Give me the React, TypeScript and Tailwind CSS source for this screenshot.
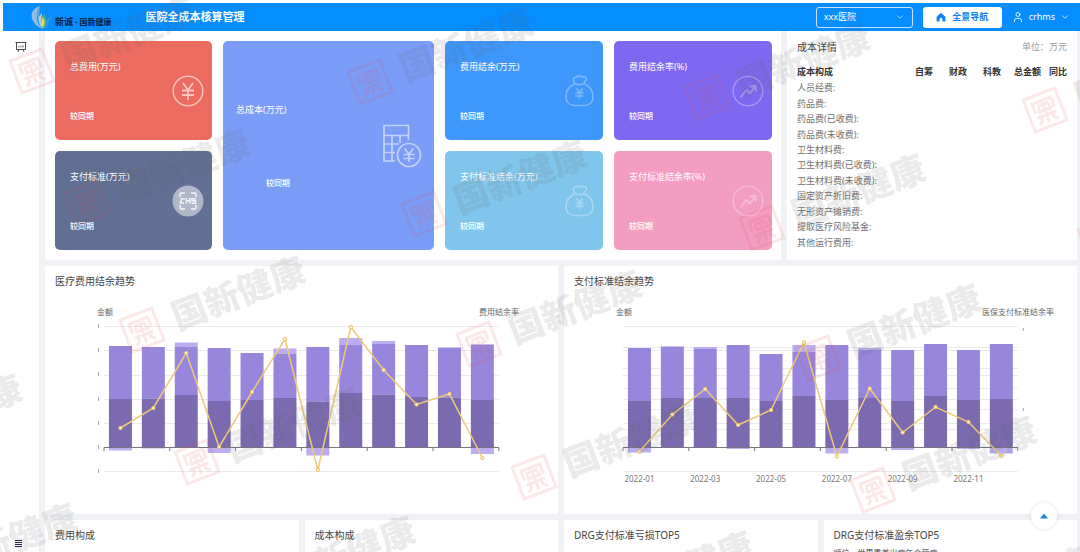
import React from "react";
import { ChevronDown, User } from "lucide-react";

const FONT = "font-['Noto_Sans','Noto_Sans_CJK_SC',sans-serif]";

/* ---------- icons ---------- */

function Logo() {
  return (
    <svg viewBox="0 0 24 26" className="h-[26px] w-6 shrink-0" aria-hidden="true">
      <path d="M9 2C-2 5-3 18 11 25C5 18 4 10 9 2Z" fill="#8fbce6" />
      <path d="M9 2C5 9 6 14 9 19C8 13 8 8 9 2Z" fill="#6ea7d9" />
      <path d="M11 9C6 13 7 20 12 25C11 19 10 15 11 9Z" fill="#c3cfc9" />
      <path d="M13 10C9 15 11 21 12 25C17 20 16 14 13 10Z" fill="#4fae68" />
      <path d="M12 13C10 17 11 21 12 24C14 20 14 16 12 13Z" fill="#e0dc7c" />
      <path d="M23 11C17 12 14 18 14 25C18 22 17 15 23 11Z" fill="#3f93dd" />
    </svg>
  );
}

function HomeIcon() {
  return (
    <svg viewBox="0 0 16 16" className="size-[10px]" fill="currentColor" aria-hidden="true">
      <path d="M8 1.2 1 7.4V14a1 1 0 0 0 1 1h3.800v-3.600a2.200 2.200 0 0 1 4.400 0V15H14a1 1 0 0 0 1-1V7.400Z" />
    </svg>
  );
}

function BoardIcon() {
  return (
    <svg viewBox="0 0 12 12" className="size-3" fill="none" stroke="#4a4a4a" aria-hidden="true">
      <path d="M.5 1.500h11M1.500 1.500v7h9v-7M4 8.500l-1 2.500M8 8.500l1 2.500" />
      <path d="M4 6.500V5M6 6.500v-2M8 6.500V4" strokeWidth=".8" />
    </svg>
  );
}

function YenCircle() {
  return (
    <svg viewBox="0 0 32 32" className="size-8" fill="none" stroke="white" strokeOpacity=".6" strokeWidth="1.500" aria-hidden="true">
      <circle cx="16" cy="16" r="14.800" />
      <path d="m11 8 5 7 5-7M16 15v10M10 15.500h12M10 20h12" strokeWidth="1.800" />
    </svg>
  );
}

function ScanBadge() {
  return (
    <svg viewBox="0 0 32 32" className="size-8" aria-hidden="true">
      <circle cx="16" cy="16" r="15.500" fill="white" fillOpacity=".5" />
      <g fill="none" stroke="white" strokeOpacity=".85" strokeWidth="1.500">
        <path d="M8 12V9.500a1.500 1.500 0 0 1 1.500-1.500H13M19 8h3.500A1.500 1.500 0 0 1 24 9.500V12M24 20v2.500a1.500 1.500 0 0 1-1.500 1.500H19M13 24H9.500A1.500 1.500 0 0 1 8 22.500V20" />
        <path d="M13 13.800H9.500L8.500 18H12M14.500 13v5.500M18 13v5.500M14.500 15.800H18M24 13.800h-4v2h3.500V18.200h-4" />
      </g>
    </svg>
  );
}

function MoneyBag() {
  return (
    <svg viewBox="0 0 32 32" className="size-8" fill="none" stroke="white" strokeOpacity=".32" strokeWidth="1.600" aria-hidden="true">
      <path d="M12 8.500C11.500 6.500 9.500 6 10.500 3.500C11.500 2 12.500 2.600 14 1.500C16 .6 18 1.500 19.500 2C22 1.200 24 2.500 23.300 4.500C22.800 6 21.500 6.500 21 8.500C19 10 14 10 12 8.500ZM12 8.500C6 11.500 3 16.500 3 21.500C3 27.500 7 30.500 12 30.500H21C26 30.500 30 27.500 30 21.500C30 16.500 27 11.500 21 8.500" />
      <path d="m13.500 13.500 3 4 3-4M16.500 17.500V24M12.500 18h8M12.500 21h8" />
    </svg>
  );
}

function TrendCircle() {
  return (
    <svg viewBox="0 0 32 32" className="size-8" fill="none" stroke="white" strokeOpacity=".3" strokeWidth="1.500" aria-hidden="true">
      <circle cx="16" cy="16" r="14.800" />
      <path d="M8.500 22.500 13.500 16q1.500-1.500 2.500 0l.8 1.600q1 1.400 2 0L23 11.500M17.500 11.500l6-.8.400 6" strokeWidth="1.900" />
    </svg>
  );
}

function Calculator() {
  return (
    <svg viewBox="0 0 40 44" className="h-11 w-10" fill="none" stroke="white" strokeOpacity=".55" strokeWidth="1.700" aria-hidden="true">
      <path d="M13 37H2V1.500H26.500V16M2 11.500H26.500M2 20H17M2 28.500H13M10 11.500V37M18 11.500V19" />
      <circle cx="27" cy="31" r="11.500" />
      <path d="m22.500 24.500 4.500 5.500 4.500-5.500M27 30v8M21.500 30.500h11M21.500 34.500h11" />
    </svg>
  );
}

/* ---------- summary cards ---------- */

type CardProps = { title: string; tone: string; icon: React.ReactNode };

function StatCard({ title, tone, icon }: CardProps) {
  return (
    <section className={`flex h-[99px] items-center justify-between rounded-[5px] pl-[15px] pr-2 text-white ${tone}`}>
      <div className="flex h-full flex-col justify-between pb-[17px] pt-[19px]">
        <h2 className="whitespace-nowrap text-[9px] leading-[14px]">{title}</h2>
        <p className="text-[8px] font-medium leading-[14px]">较同期</p>
      </div>
      <div className="shrink-0">{icon}</div>
    </section>
  );
}

/* ---------- trend charts ---------- */

type Point = { top: number; cap?: number; mid: number; low?: number; line: number };
type ChartProps = {
  label: string;
  left: string;
  right: string;
  rightX: number;
  start: number;
  data: Point[];
  grid: number[];
  months?: string[];
  leftTicks?: boolean;
};

const ZERO = 149.5;
const STEP = 32.9;

function TrendChart({ label, left, right, rightX, start, data, grid, months, leftTicks }: ChartProps) {
  const end = start + STEP * 12;
  const cx = (i: number) => start + STEP * (i + 0.5);
  return (
    <svg viewBox="0 0 513 192" className="block w-full" role="img" aria-label={label}>
      {grid.map((y) => (
        <line key={y} x1={start} x2={end} y1={y} y2={y} stroke="#ebebef" />
      ))}
      {data.map((d, i) => {
        const x = cx(i) - 11.5;
        const body = d.cap ?? d.top;
        return (
          <g key={i}>
            {d.cap !== undefined && <rect x={x} y={d.top} width="23" height={d.cap - d.top} fill="#bbadf0" />}
            <rect x={x} y={body} width="23" height={d.mid - body} fill="#9886dc" />
            <rect x={x} y={d.mid} width="23" height={ZERO - d.mid} fill="#7b6ab0" />
            {d.low !== undefined && <rect x={x} y={ZERO} width="23" height={d.low - ZERO} fill="#bbadf0" />}
          </g>
        );
      })}
      <path
        d={`M${start} ${ZERO}H${end}` + [0, 2, 4, 6, 8, 10, 12].map((n) => `M${start + STEP * n} ${ZERO}v3.500`).join("")}
        stroke="#77747f"
        fill="none"
      />
      {leftTicks && [28, 52, 76, 101, 125, 149, 173].map((y) => <rect key={y} x="53" y={y - 2} width="1" height="4" fill="#a5a5a5" />)}
      {!leftTicks && [30, 110].map((y) => <rect key={y} x={end + 5} y={y} width="1" height="3" fill="#a5a5a5" />)}
      <polyline points={data.map((d, i) => `${cx(i)},${d.line}`).join(" ")} fill="none" stroke="#efc97a" strokeWidth="1.500" />
      {data.map((d, i) => (
        <circle key={i} cx={cx(i)} cy={d.line} r="1.700" fill="#fff3d0" stroke="#efc05e" />
      ))}
      <g fontSize="8" fill="#666">
        <text x={start - 7} y="17">{left}</text>
        <text x={rightX} y="17" textAnchor="end">{right}</text>
        {months?.map((m, i) => (
          <text key={m} x={cx(i * 2)} y="184" textAnchor="middle" fill="#777">{m}</text>
        ))}
      </g>
    </svg>
  );
}

const feeTrend: Point[] = [
  { top: 48, mid: 101, low: 152.5, line: 130 },
  { top: 49, mid: 100.5, low: 150.5, line: 110 },
  { top: 44.5, cap: 49, mid: 97, line: 55 },
  { top: 50, mid: 103, low: 155, line: 149 },
  { top: 55, mid: 102, line: 94 },
  { top: 50.5, cap: 56, mid: 100, line: 41 },
  { top: 49, mid: 103.5, low: 157.5, line: 172 },
  { top: 40, cap: 47, mid: 95, line: 29 },
  { top: 43, cap: 46, mid: 96.5, line: 72 },
  { top: 47, mid: 99, line: 106.5 },
  { top: 49.5, mid: 99.5, line: 96 },
  { top: 46.5, mid: 102, low: 156, line: 160 },
];

const payTrend: Point[] = [
  { top: 50, mid: 103, low: 154.5, line: 153.5 },
  { top: 48.5, mid: 100, line: 116.5 },
  { top: 49, cap: 51, mid: 100, line: 91 },
  { top: 47, mid: 100, low: 151, line: 127 },
  { top: 56, mid: 103, line: 112 },
  { top: 47, cap: 54, mid: 98, line: 44.5 },
  { top: 47, mid: 102, low: 155.5, line: 158.5 },
  { top: 50, cap: 51.5, mid: 100, line: 90.5 },
  { top: 52, mid: 103, low: 152, line: 134.5 },
  { top: 46, mid: 98, line: 109 },
  { top: 52, mid: 102, low: 151, line: 124 },
  { top: 46, mid: 101, low: 155.5, line: 158 },
];

function Panel({ title, children }: { title: string; children?: React.ReactNode }) {
  return (
    <section className="min-w-0 bg-white">
      <h2 className="px-[10px] pt-[7px] text-[10px] leading-4 text-[#444]">{title}</h2>
      {children}
    </section>
  );
}

/* ---------- cost table ---------- */

const costRows = [
  "人员经费:",
  "药品费:",
  "药品费(已收费):",
  "药品费(未收费):",
  "卫生材料费:",
  "卫生材料费(已收费):",
  "卫生材料费(未收费):",
  "固定资产折旧费:",
  "无形资产摊销费:",
  "提取医疗风险基金:",
  "其他运行费用:",
];

function CostDetail() {
  return (
    <section className="bg-white px-[10px] pt-2">
      <div className="flex items-center justify-between leading-4">
        <h2 className="text-[10px] text-[#444]">成本详情</h2>
        <span className="text-[9px] text-[#999]">单位：万元</span>
      </div>
      <table className="mt-2 h-[187px] w-full table-fixed text-[9px] leading-[13px]">
        <thead>
          <tr className="h-[17px] text-right text-[#333]">
            <th className="p-0 text-left font-bold">成本构成</th>
            <th className="w-[34px] p-0 font-bold">自筹</th>
            <th className="w-[34px] p-0 font-bold">财政</th>
            <th className="w-[34px] p-0 font-bold">科教</th>
            <th className="w-10 whitespace-nowrap p-0 font-bold">总金额</th>
            <th className="w-[26px] p-0 font-bold">同比</th>
          </tr>
        </thead>
        <tbody className="text-[#707070]">
          {costRows.map((row) => (
            <tr key={row}>
              <td className="p-0">{row}</td>
              <td /><td /><td /><td /><td />
            </tr>
          ))}
        </tbody>
      </table>
    </section>
  );
}

/* ---------- watermark ---------- */

const marks = [
  [32, 71], [370, 82], [707, 97], [1045, 110],
  [87, 203], [424, 214], [762, 228], [1100, 240],
  [142, 330], [479, 344], [818, 358],
  [-141, 448], [197, 462], [534, 477], [873, 490],
  [-86, 577], [252, 590], [590, 605], [928, 620],
];

function Watermark() {
  return (
    <div className="pointer-events-none absolute inset-0 overflow-hidden" aria-hidden="true">
      {marks.map(([x, y]) => (
        <div key={`${x},${y}`} className="absolute" style={{ left: x, top: y }}>
          <div className="flex h-[38px] origin-[0_50%] -translate-y-1/2 -rotate-[21deg] items-center">
            <svg viewBox="0 0 38 38" className="-ml-[19px] size-[38px] shrink-0" fill="none" stroke="#e05050" strokeOpacity=".13">
              <path
                d="M2 2H36V36H2ZM8 9H30M9 9V19M29 9V19M13 13H25M19 11V19M12 19H27M9 24H29M19 20V32M14 27 9 32M24 27 29 32M12 16H15M23 16H26M13 22V29M25 22V29"
                strokeWidth="3"
              />
            </svg>
            <span className="ml-[14px] whitespace-nowrap text-[35px] font-black leading-[38px] text-[#606060]/15">国新健康</span>
          </div>
        </div>
      ))}
    </div>
  );
}

/* ---------- page ---------- */

export default function App() {
  return (
    <div className={`relative flex h-screen flex-col overflow-hidden bg-white pl-[3px] pt-[3px] ${FONT}`}>
      <header className="flex h-7 shrink-0 items-center bg-[#068dff] pl-7 pr-[10px] text-white">
        <Logo />
        <div className="flex items-center pt-[10px] font-bold leading-3 text-[#08213f]">
          <span className="text-[9px]">新诚</span>
          <span className="px-[2px] text-[9px]">·</span>
          <span className="text-[8px]">国新健康</span>
        </div>
        <h1 className="ml-[34px] text-[11px] font-bold">医院全成本核算管理</h1>
        <div className="ml-auto flex items-center gap-[10px]">
          <label className="relative flex items-center">
            <select aria-label="医院" className="h-[21px] w-[97px] appearance-none rounded-[3px] border border-white/75 bg-transparent pl-[7px] text-[9px] text-white">
              <option>xxx医院</option>
            </select>
            <ChevronDown className="pointer-events-none absolute right-2 size-[10px]" strokeWidth={1.5} />
          </label>
          <button type="button" className="flex h-[21px] w-[79px] items-center justify-center gap-[6px] rounded-[3px] bg-white text-[9px] font-bold text-[#0b83ea]">
            <HomeIcon />
            全景导航
          </button>
          <button type="button" className="flex items-center gap-[5px] text-[9px]">
            <User className="size-3" strokeWidth={1.8} />
            crhms
            <ChevronDown className="size-[10px]" strokeWidth={1.8} />
          </button>
        </div>
      </header>

      <div className="flex min-h-0 flex-1">
        <aside className="flex w-9 shrink-0 flex-col items-start justify-between pb-[3px] pl-3 pt-[10px]">
          <a href="#board" aria-label="看板"><BoardIcon /></a>
          <button type="button" aria-label="菜单" className="flex h-3 items-center">
            <svg viewBox="0 0 8 8" className="size-2" stroke="#1f2a44" strokeWidth="1" aria-hidden="true">
              <path d="M0 1.500h7M0 3.500h7M0 5.500h7M0 7.500h7" />
            </svg>
          </button>
        </aside>

        <main className="flex min-w-0 flex-1 flex-col gap-[6px] bg-[#f1f2f6] pl-[6px] pr-[3px]">
          <div className="grid shrink-0 grid-cols-[736fr_290fr] gap-[6px]">
            <div className="grid grid-cols-[157fr_211fr_158fr_158fr] grid-rows-2 gap-[11px] bg-white py-[10px] pl-[10px] pr-[9px]">
              <StatCard title="总费用(万元)" tone="bg-[#ec6b60]" icon={<YenCircle />} />
              <section className="row-span-2 flex items-center justify-between rounded-[5px] bg-[#7b9df7] pl-[13px] pr-3 text-white">
                <div className="flex h-full flex-col justify-between pb-[60px] pt-[62px]">
                  <h2 className="text-[9px] leading-[14px]">总成本(万元)</h2>
                  <p className="pl-[30px] text-[8px] font-medium leading-[14px]">较同期</p>
                </div>
                <Calculator />
              </section>
              <StatCard title="费用结余(万元)" tone="bg-[#3e97fb]" icon={<MoneyBag />} />
              <StatCard title="费用结余率(%)" tone="bg-[#7e68f1]" icon={<TrendCircle />} />
              <StatCard title="支付标准(万元)" tone="bg-[#606f92]" icon={<ScanBadge />} />
              <StatCard title="支付标准结余(万元)" tone="bg-[#80c5eb]" icon={<MoneyBag />} />
              <StatCard title="支付标准结余率(%)" tone="bg-[#f49dc2]" icon={<TrendCircle />} />
            </div>
            <CostDetail />
          </div>

          <div className="grid shrink-0 grid-cols-2 gap-[6px]">
            <Panel title="医疗费用结余趋势">
              <div className="pb-[24px] pt-[9px]">
                <TrendChart
                  label="医疗费用结余趋势"
                  left="金额"
                  right="费用结余率"
                  rightX={474}
                  start={59}
                  data={feeTrend}
                  grid={[28.5, 52.5, 77.5, 101.5, 125.5, 173.5]}
                  leftTicks
                />
              </div>
            </Panel>
            <Panel title="支付标准结余趋势">
              <div className="pb-[24px] pt-[9px]">
                <TrendChart
                  label="支付标准结余趋势"
                  left="金额"
                  right="医保支付标准结余率"
                  rightX={490}
                  start={59}
                  data={payTrend}
                  grid={[28.5, 49.5, 52.5, 70.5, 77.5, 90.5, 101.5, 111.5, 125.5, 131.5, 173.5]}
                  months={["2022-01", "2022-03", "2022-05", "2022-07", "2022-09", "2022-11"]}
                />
              </div>
            </Panel>
          </div>

          <div className="grid min-h-0 flex-1 grid-cols-4 gap-[6px]">
            <Panel title="费用构成" />
            <Panel title="成本构成" />
            <Panel title="DRG支付标准亏损TOP5" />
            <Panel title="DRG支付标准盈余TOP5">
              <p className="px-[10px] pt-1 text-[8px] leading-3 text-[#444]">顺位、世界重首出病年个营病</p>
            </Panel>
          </div>
        </main>
      </div>

      <Watermark />

      <button
        type="button"
        aria-label="返回顶部"
        className="absolute bottom-[23px] right-[23px] flex size-[26px] items-center justify-center rounded-full bg-white shadow-[0_0_5px_rgba(0,0,0,0.12)]"
      >
        <svg viewBox="0 0 10 6" className="h-[6px] w-2" aria-hidden="true">
          <path d="M5 0 10 6H0Z" fill="#1d8ad8" />
        </svg>
      </button>
    </div>
  );
}
